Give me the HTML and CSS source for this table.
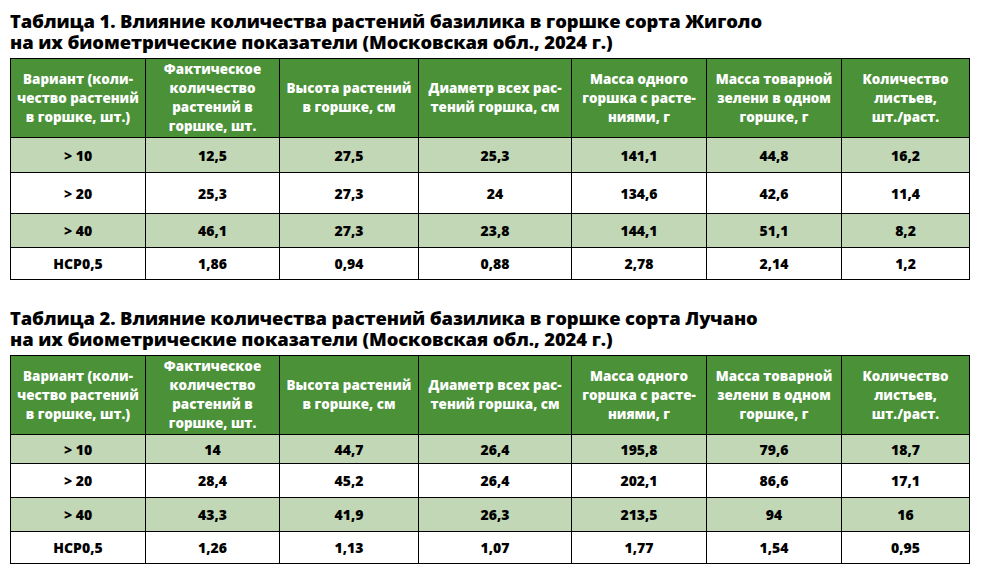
FILE: index.html
```html
<!DOCTYPE html>
<html lang="ru">
<head>
<meta charset="utf-8">
<link rel="stylesheet" href="styles.css">
</head>
<body>
<div class="page">
  <section class="block">
    <h2 class="title">Таблица 1. Влияние количества растений базилика в горшке сорта Жиголо<br>на их биометрические показатели (Московская обл., 2024 г.)</h2>
    <table class="data t1">
      <colgroup>
        <col class="c1"><col class="c2"><col class="c3"><col class="c4"><col class="c5"><col class="c6"><col class="c7">
      </colgroup>
      <thead>
        <tr>
          <th>Вариант (коли-<br>чество растений<br>в горшке, шт.)</th>
          <th>Фактическое<br>количество<br>растений в<br>горшке, шт.</th>
          <th>Высота растений<br>в горшке, см</th>
          <th>Диаметр всех рас-<br>тений горшка, см</th>
          <th>Масса одного<br>горшка с расте-<br>ниями, г</th>
          <th>Масса товарной<br>зелени в одном<br>горшке, г</th>
          <th>Количество<br>листьев,<br>шт./раст.</th>
        </tr>
      </thead>
      <tbody>
        <tr class="alt r1"><td>&gt; 10</td><td>12,5</td><td>27,5</td><td>25,3</td><td>141,1</td><td>44,8</td><td>16,2</td></tr>
        <tr class="r2"><td>&gt; 20</td><td>25,3</td><td>27,3</td><td>24</td><td>134,6</td><td>42,6</td><td>11,4</td></tr>
        <tr class="alt r3"><td>&gt; 40</td><td>46,1</td><td>27,3</td><td>23,8</td><td>144,1</td><td>51,1</td><td>8,2</td></tr>
        <tr class="r4"><td>НСР0,5</td><td>1,86</td><td>0,94</td><td>0,88</td><td>2,78</td><td>2,14</td><td>1,2</td></tr>
      </tbody>
    </table>
  </section>
  <section class="block second">
    <h2 class="title">Таблица 2. Влияние количества растений базилика в горшке сорта Лучано<br>на их биометрические показатели (Московская обл., 2024 г.)</h2>
    <table class="data t2">
      <colgroup>
        <col class="c1"><col class="c2"><col class="c3"><col class="c4"><col class="c5"><col class="c6"><col class="c7">
      </colgroup>
      <thead>
        <tr>
          <th>Вариант (коли-<br>чество растений<br>в горшке, шт.)</th>
          <th>Фактическое<br>количество<br>растений в<br>горшке, шт.</th>
          <th>Высота растений<br>в горшке, см</th>
          <th>Диаметр всех рас-<br>тений горшка, см</th>
          <th>Масса одного<br>горшка с расте-<br>ниями, г</th>
          <th>Масса товарной<br>зелени в одном<br>горшке, г</th>
          <th>Количество<br>листьев,<br>шт./раст.</th>
        </tr>
      </thead>
      <tbody>
        <tr class="alt r1"><td>&gt; 10</td><td>14</td><td>44,7</td><td>26,4</td><td>195,8</td><td>79,6</td><td>18,7</td></tr>
        <tr class="r2"><td>&gt; 20</td><td>28,4</td><td>45,2</td><td>26,4</td><td>202,1</td><td>86,6</td><td>17,1</td></tr>
        <tr class="alt r3"><td>&gt; 40</td><td>43,3</td><td>41,9</td><td>26,3</td><td>213,5</td><td>94</td><td>16</td></tr>
        <tr class="r4"><td>НСР0,5</td><td>1,26</td><td>1,13</td><td>1,07</td><td>1,77</td><td>1,54</td><td>0,95</td></tr>
      </tbody>
    </table>
  </section>
</div>
</body>
</html>
```
FILE: styles.css
```css
html, body {
  margin: 0;
  padding: 0;
  background: #ffffff;
}
.page {
  padding: 10px 0 0 10px;
  font-family: "Open Sans", "Noto Sans", sans-serif;
  color: #000;
}
.block {
  display: flex;
  flex-direction: column;
}
.second {
  margin-top: 27px;
}
.title {
  margin: 0 0 6px 0;
  font-size: 18.4px;
  line-height: 21px;
  font-weight: 800;
  color: #000;
  letter-spacing: -0.1px;
}
.data {
  border-collapse: collapse;
  table-layout: fixed;
  width: 960px;
}
.c1 { width: 135px; }
.c2 { width: 134px; }
.c3 { width: 139px; }
.c4 { width: 153px; }
.c5 { width: 135px; }
.c6 { width: 135px; }
.c7 { width: 128px; }
.data th,
.data td {
  border: 1px solid #000;
  text-align: center;
  font-weight: 800;
  padding: 0;
}
.data th {
  background: #4a9138;
  color: #fff;
  font-size: 13.4px;
  line-height: 19px;
  height: 78px;
}
.data td {
  font-size: 14px;
  background: #fff;
}
.data tr.alt td {
  background: #c2d7b5;
}
.t1 .r1 td { height: 34px; }
.t1 .r2 td { height: 40px; }
.t1 .r3 td { height: 33px; }
.t1 .r4 td { height: 31px; }
.t2 .r1 td { height: 28px; }
.t2 .r2 td { height: 33px; }
.t2 .r3 td { height: 33px; }
.t2 .r4 td { height: 31px; }
```
